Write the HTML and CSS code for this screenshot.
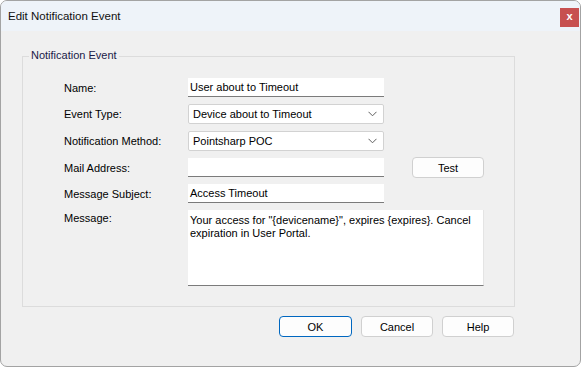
FILE: index.html
```html
<!DOCTYPE html>
<html lang="en">
<head>
  <meta charset="UTF-8">
  <title>Edit Notification Event</title>
  <link rel="stylesheet" href="styles.css">
</head>
<body>

  <div class="window">
    <div class="titlebar">
      <span class="title">Edit Notification Event</span>
      <span class="close">x</span>
    </div>

    <div class="group">
      <span class="legend">Notification Event</span>

      <div class="form">
        <label class="lbl">Name:</label>
        <div class="field text">User about to Timeout</div>
        <div></div>

        <label class="lbl">Event Type:</label>
        <div class="field combo">
          <span>Device about to Timeout</span>
          <svg width="9" height="6" viewBox="0 0 9 6"><path d="M0.5 0.8 L4.5 4.8 L8.5 0.8" fill="none" stroke="#5f5f5f" stroke-width="1"/></svg>
        </div>
        <div></div>

        <label class="lbl">Notification Method:</label>
        <div class="field combo">
          <span>Pointsharp POC</span>
          <svg width="9" height="6" viewBox="0 0 9 6"><path d="M0.5 0.8 L4.5 4.8 L8.5 0.8" fill="none" stroke="#5f5f5f" stroke-width="1"/></svg>
        </div>
        <div></div>

        <label class="lbl">Mail Address:</label>
        <div class="field text"></div>
        <button class="btn test">Test</button>

        <label class="lbl">Message Subject:</label>
        <div class="field text">Access Timeout</div>
        <div></div>

        <label class="lbl top">Message:</label>
        <div class="field memo">Your access for "{devicename}", expires {expires}. Cancel expiration in User Portal.</div>
      </div>
    </div>

    <div class="actions">
      <button class="btn default">OK</button>
      <button class="btn">Cancel</button>
      <button class="btn">Help</button>
    </div>
  </div>

</body>
</html>
```

FILE: styles.css
```css
body {
  margin: 0;
  font-family: "Liberation Sans", Arial, sans-serif;
  font-size: 11px;
  color: #000;
  background: #fff;
}
/* Dialog frame */
.window {
  box-sizing: border-box;
  width: 581px;
  height: 367px;
  border: 1px solid #a3a3a3;
  border-radius: 7px;
  overflow: hidden;
  background: #f0f0f0;
}
.titlebar {
  height: 30px;
  background: #eef3f9;
  display: flex;
  align-items: flex-start;
  justify-content: space-between;
}
.title {
  font-size: 11.5px;
  padding: 9px 0 0 7px;
  color: #111;
}
.close {
  width: 19px;
  height: 19px;
  margin: 7px 1px 0 0;
  background: #c75050;
  color: #fff;
  font-weight: bold;
  font-size: 11px;
  line-height: 17px;
  text-align: center;
}
/* Group box */
.group {
  position: relative;
  box-sizing: border-box;
  width: 493px;
  height: 251px;
  margin: 25px 0 0 21px;
  border: 1px solid #dcdcdc;
  padding: 21px 0 0 41px;
}
.legend {
  position: absolute;
  top: -8px;
  left: 6px;
  padding: 0 2px;
  background: #f0f0f0;
  color: #1a1a48;
}
.form {
  display: grid;
  grid-template-columns: 124px 196px 100px;
  grid-template-rows: 19px 20px 20px 19px 19px 76px;
  row-gap: 7px;
}
.lbl {
  display: flex;
  align-items: center;
}
.lbl.top {
  align-items: flex-start;
  padding-top: 2px;
}
/* Inputs */
.field {
  box-sizing: border-box;
  background: #fff;
  display: flex;
  align-items: center;
  padding: 0 2px;
  white-space: nowrap;
}
.text {
  border-bottom: 1px solid #7b7b7b;
}
.combo {
  border: 1px solid #d2d2d2;
  border-radius: 2px;
  padding: 0 6px 0 4px;
  justify-content: space-between;
}
.memo {
  grid-column: 2 / 4;
  width: 296px;
  align-items: flex-start;
  white-space: normal;
  line-height: 13px;
  padding: 4px 2px;
  border-bottom: 1px solid #7b7b7b;
  border-right: 1px solid #e4e4e4;
}
/* Buttons */
.btn {
  box-sizing: border-box;
  width: 72px;
  height: 21px;
  padding: 0;
  font: inherit;
  color: #000;
  background: #fdfdfd;
  border: 1px solid #d0d0d0;
  border-radius: 4px;
}
.test {
  align-self: center;
  justify-self: end;
  width: 72px;
  height: 21px;
}
.btn.default {
  border: 1px solid #0067c0;
  width: 73px;
}
.actions {
  width: 492px;
  margin: 9px 0 0 21px;
  display: flex;
  justify-content: flex-end;
  gap: 9px;
}
```
